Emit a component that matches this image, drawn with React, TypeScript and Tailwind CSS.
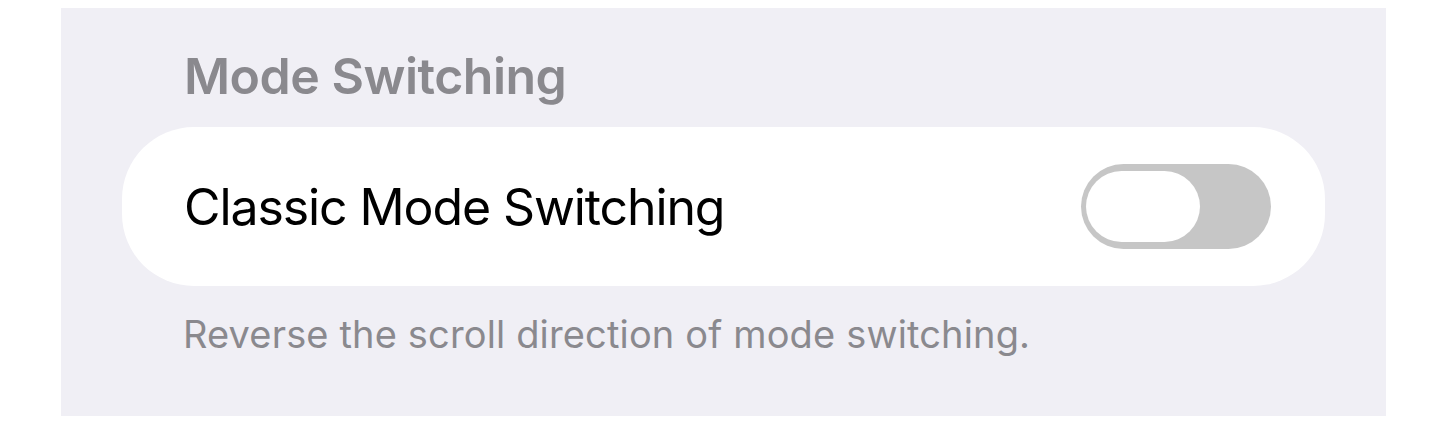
export default function App() {
  return (
    <div className="min-h-screen bg-white pt-2 pl-[61px] pr-[54px]" style={{ fontFamily: 'Inter, "Noto Sans", sans-serif' }}>
      <div className="bg-[#f0eff5] px-[61px] pt-[38px] pb-[59px]">
        {/* Section header */}
        <h2 className="pl-[62px] text-[50px] leading-[60px] font-semibold tracking-[-0.5px] text-[#8a898e]">Mode Switching</h2>

        {/* Row */}
        <div className="mt-[21px] h-[159px] rounded-[72px] bg-white pl-[62px] pr-[54px] flex items-center justify-between">
          <span className="text-[50px] leading-[60px] tracking-[-1.1px] text-black">Classic Mode Switching</span>
          <button className="relative w-[190px] h-[85px] rounded-full bg-[#c6c6c6]" aria-label="toggle">
            <span className="absolute left-[5px] top-[7px] w-[114px] h-[71px] rounded-full bg-white"></span>
          </button>
        </div>

        {/* Footer */}
        <p className="mt-[25px] pl-[61px] text-[38px] leading-[46px] tracking-[0.15px] text-[#8a898e]">
          Reverse the scroll direction of mode switching.
        </p>
      </div>
    </div>
  )
}
